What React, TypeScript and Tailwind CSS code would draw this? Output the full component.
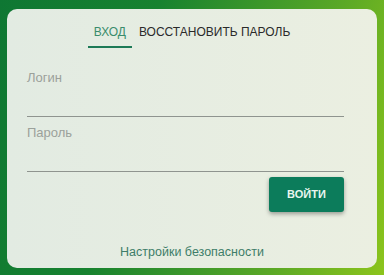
export default function App() {
  return (
    <div
      className="w-[384px] h-[275px] pt-[9px] pl-[7px] bg-[linear-gradient(105deg,#0e7733_0%,#17822f_35%,#5aa826_75%,#8cc41c_100%)]"
      style={{ fontFamily: '"Liberation Sans", Arial, sans-serif' }}
    >
      <div className="w-[370px] h-[259px] rounded-[10px] bg-[linear-gradient(90deg,#e2ebe2,#ebefe1)] flex flex-col">
        <div className="flex justify-center gap-[1px] pt-[15px]">
          <div className="px-[6px] pb-[6px] border-b-[2.5px] border-[#1d7a57] text-[12px] leading-[16px] text-[#3a8c6c]">
            ВХОД
          </div>
          <div className="px-[6px] pb-[6px] border-b-[2.5px] border-transparent text-[12px] leading-[16px] text-[#2a2a2a]">
            ВОССТАНОВИТЬ ПАРОЛЬ
          </div>
        </div>
        <div className="pl-[20px] pr-[33px] pt-[22px] flex flex-col">
          <div className="h-[47px] border-b border-[#8f948f]">
            <div className="text-[13px] leading-[16px] text-[#9ba19b]">Логин</div>
          </div>
          <div className="h-[47px] mt-[8px] border-b border-[#8f948f]">
            <div className="text-[13px] leading-[16px] text-[#9ba19b]">Пароль</div>
          </div>
          <div className="flex justify-end mt-[5px]">
            <button className="w-[75px] h-[35px] rounded-[3px] bg-[#0c7c5b] text-[#e9f6ef] text-[11px] font-bold shadow-[0_2px_4px_rgba(0,0,0,0.35)]">
              ВОЙТИ
            </button>
          </div>
        </div>
        <div className="mt-[32px] text-center text-[12.5px] leading-[16px] text-[#3e7d69]">
          Настройки безопасности
        </div>
      </div>
    </div>
  );
}
